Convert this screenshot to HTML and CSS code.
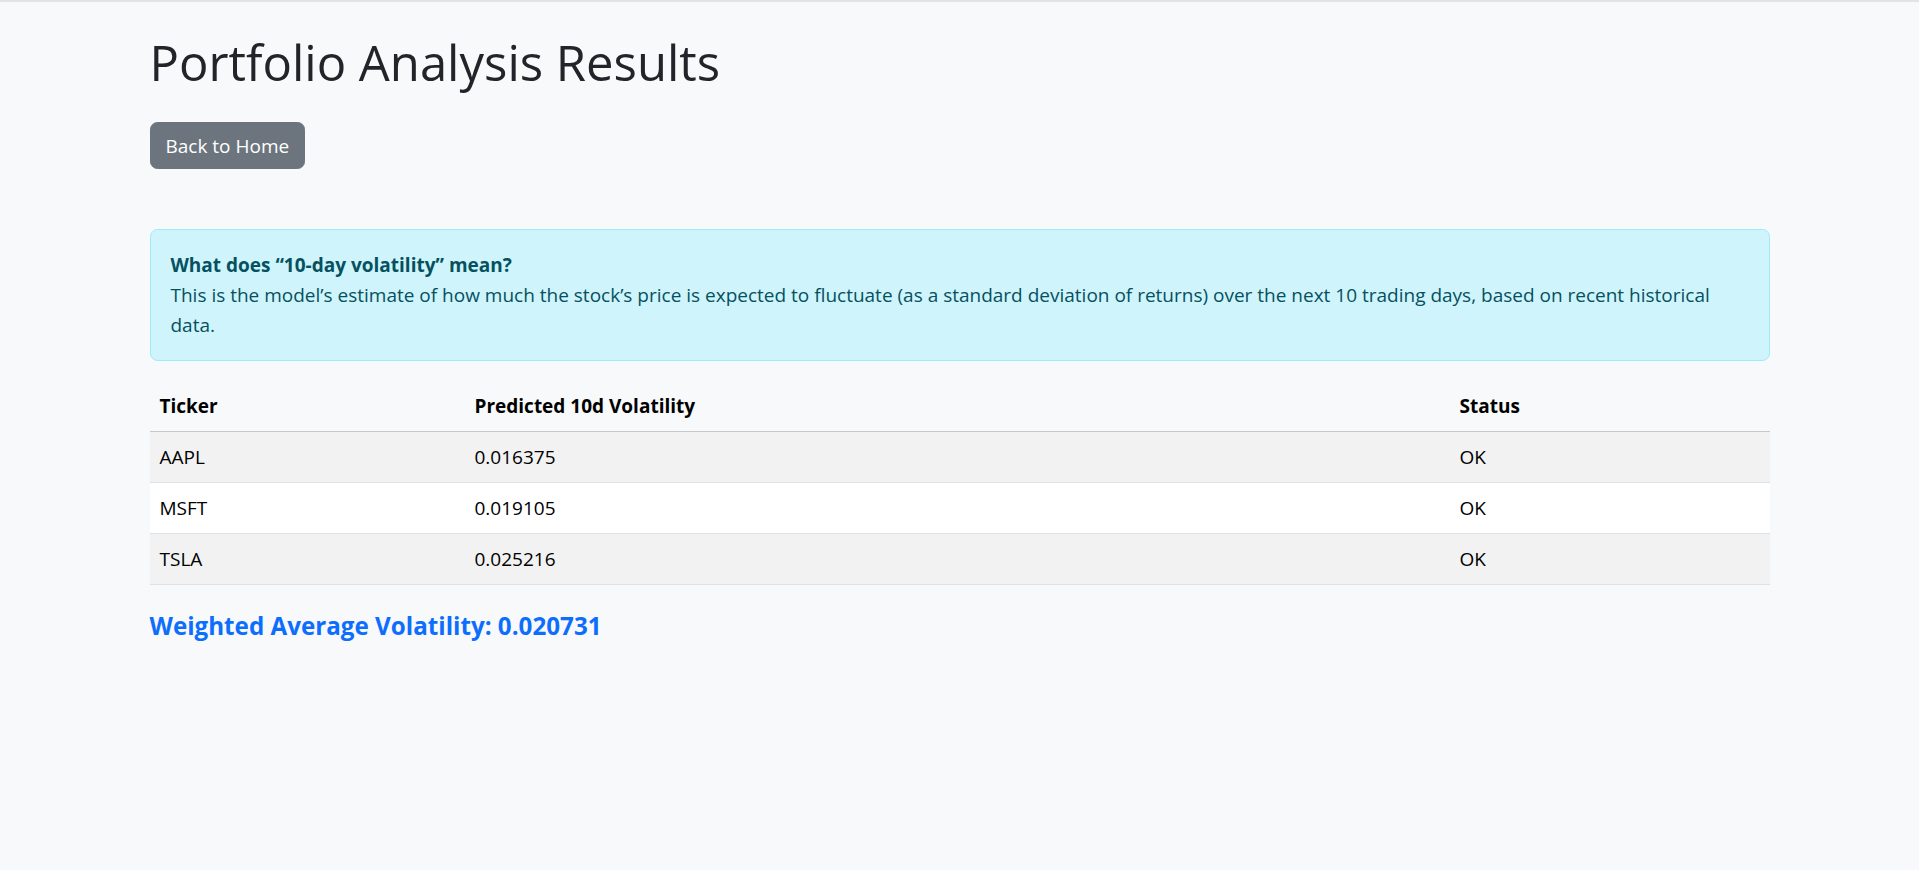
FILE: index.html
```html
<!DOCTYPE html>
<html lang="en">
<head>
<meta charset="utf-8">
<title>Portfolio Analysis Results</title>
<link rel="stylesheet" href="styles.css">
</head>
<body>
<div class="container">
  <h1 class="title">Portfolio Analysis Results</h1>
  <a class="btn-back" href="#">Back to Home</a>

  <div class="alert-info">
    <strong>What does “10-day volatility” mean?</strong><br>
    This is the model’s estimate of how much the stock’s price is expected to fluctuate (as a standard deviation of returns) over the next 10 trading days, based on recent historical data.
  </div>

  <table class="results">
    <thead>
      <tr>
        <th class="col-ticker">Ticker</th>
        <th class="col-vol">Predicted 10d Volatility</th>
        <th class="col-status">Status</th>
      </tr>
    </thead>
    <tbody>
      <tr><td>AAPL</td><td>0.016375</td><td>OK</td></tr>
      <tr><td>MSFT</td><td>0.019105</td><td>OK</td></tr>
      <tr><td>TSLA</td><td>0.025216</td><td>OK</td></tr>
    </tbody>
  </table>

  <h5 class="weighted">Weighted Average Volatility: 0.020731</h5>
</div>
</body>
</html>
```

FILE: styles.css
```css
* { box-sizing: border-box; }

html, body {
  margin: 0;
  padding: 0;
}

body {
  background: #f8f9fa;
  border-top: 2px solid #e3e3e3;
  font-family: "Open Sans", "Noto Sans", sans-serif;
  font-size: 19px;
  line-height: 30px;
  color: #212529;
  min-height: 870px;
}

.container {
  max-width: 1650px;
  margin: 0 auto;
  padding: 30px 15px 0;
}

.title {
  font-size: 49px;
  font-weight: 500;
  line-height: 60px;
  margin: 0 0 30px;
  color: #212529;
}

.btn-back {
  display: inline-block;
  background: #6c757d;
  color: #fff;
  text-decoration: none;
  border: 1px solid #6c757d;
  border-radius: 7.5px;
  padding: 7.5px 15px;
  line-height: 30px;
  font-size: 19px;
}

.alert-info {
  margin-top: 60px;
  margin-bottom: 20px;
  padding: 20px;
  background: #cff4fc;
  border: 1px solid #9eeaf9;
  border-radius: 7.5px;
  color: #055160;
}

.alert-info strong {
  font-weight: 700;
}

.results {
  width: 100%;
  border-collapse: collapse;
  margin-bottom: 20px;
  color: #000;
}

.results th,
.results td {
  text-align: left;
  padding: 10px;
  line-height: 30px;
  border-bottom: 1px solid #dee2e6;
}

.results thead th {
  background: #f8f9fa;
  font-weight: 700;
  border-bottom-color: #c6c7c8;
}

.results tbody tr td { background: #fff; }
.results tbody tr:nth-child(odd) td { background: #f2f2f2; }

.col-ticker { width: 315px; }
.col-vol { width: 985px; }
.col-status { width: 320px; }

.weighted {
  margin: 0;
  padding-top: 6px;
  font-size: 24.2px;
  line-height: 30px;
  font-weight: 700;
  color: #0d6efd;
}
```
